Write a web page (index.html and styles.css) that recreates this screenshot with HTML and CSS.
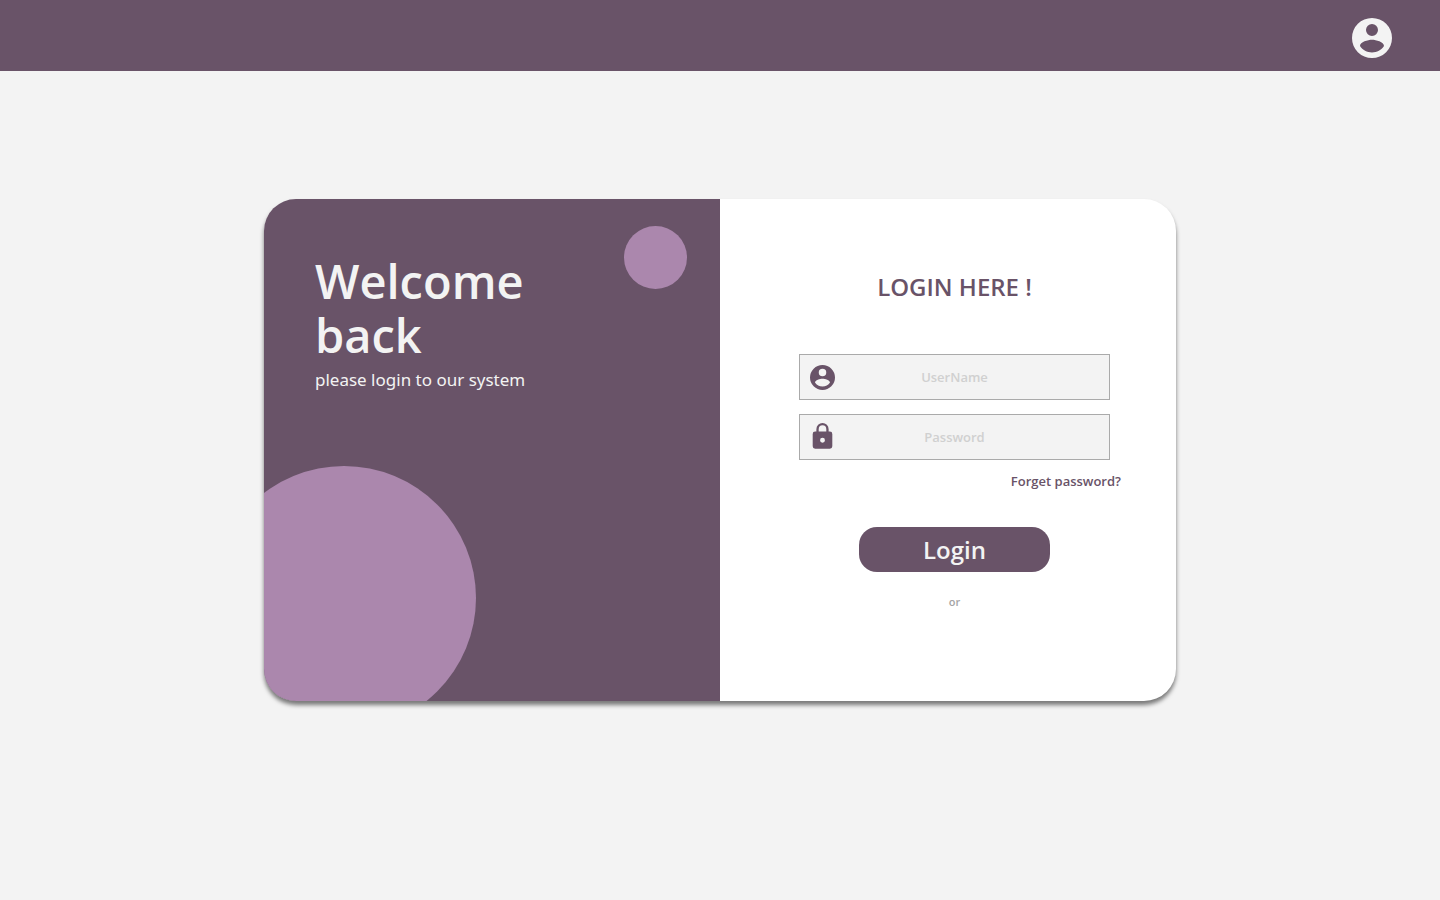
FILE: index.html
```html
<!DOCTYPE html>
<html lang="en">
<head>
<meta charset="utf-8">
<meta name="viewport" content="width=device-width, initial-scale=1">
<title>Login</title>
<link rel="stylesheet" href="styles.css">
</head>
<body>
<header class="topbar">
  <button class="account" type="button" aria-label="Account">
    <svg viewBox="2 2 20 20" aria-hidden="true"><path fill-rule="evenodd" d="M12 2a10 10 0 1 0 0 20 10 10 0 0 0 0-20zm0 3a3 3 0 1 1 0 6 3 3 0 0 1 0-6zm0 14.2c-2.5 0-4.71-1.28-6-3.22.03-1.99 4-3.08 6-3.08 1.99 0 5.97 1.09 6 3.08-1.29 1.94-3.5 3.22-6 3.22z"/></svg>
  </button>
</header>
<main class="page">
  <div class="card">
    <section class="welcome">
      <span class="circle circle-small"></span>
      <span class="circle circle-large"></span>
      <h1 class="welcome-title">Welcome<br>back</h1>
      <p class="welcome-text">please login to our system</p>
    </section>
    <form class="login">
      <h2 class="login-title">LOGIN HERE !</h2>
      <label class="field">
        <svg class="field-icon" viewBox="2 2 20 20" aria-hidden="true"><path fill-rule="evenodd" d="M12 2a10 10 0 1 0 0 20 10 10 0 0 0 0-20zm0 3a3 3 0 1 1 0 6 3 3 0 0 1 0-6zm0 14.2c-2.5 0-4.71-1.28-6-3.22.03-1.99 4-3.08 6-3.08 1.99 0 5.97 1.09 6 3.08-1.29 1.94-3.5 3.22-6 3.22z"/></svg>
        <input class="field-input" type="text" placeholder="UserName" aria-label="UserName">
      </label>
      <label class="field">
        <svg class="field-icon" viewBox="1.8 2.6 20.4 20.4" aria-hidden="true"><path fill-rule="evenodd" d="M18 8h-1V6A5 5 0 0 0 7 6v2H6a2 2 0 0 0-2 2v10a2 2 0 0 0 2 2h12a2 2 0 0 0 2-2V10a2 2 0 0 0-2-2zm-6 9a2 2 0 1 1 0-4 2 2 0 0 1 0 4zM8.900 8V6a3.100 3.100 0 0 1 6.200 0v2z"/></svg>
        <input class="field-input" type="password" placeholder="Password" aria-label="Password">
      </label>
      <a class="forgot" href="#">Forget password?</a>
      <button class="submit" type="submit">Login</button>
      <p class="or">or</p>
    </form>
  </div>
</main>
</body>
</html>
```
FILE: styles.css
```css
* {
  box-sizing: border-box;
}

body {
  margin: 0;
  min-height: 100vh;
  background: #f3f3f3;
  color: #695368;
  font-family: "Open Sans", "Noto Sans", sans-serif;
}

.topbar {
  display: flex;
  justify-content: flex-end;
  padding: 18px 48px 13px;
  background: #695368;
}

.account {
  width: 40px;
  height: 40px;
  padding: 0;
  border: 0;
  background: none;
}

.account svg {
  display: block;
  fill: #f3f3f3;
}

.page {
  display: flex;
  justify-content: center;
  padding: 128px 24px;
}

.card {
  display: grid;
  grid-template-columns: 1fr 1fr;
  width: 100%;
  max-width: 912px;
  border-radius: 32px;
  background: #fff;
  box-shadow: 0 4px 4px rgba(0, 0, 0, 0.5);
  overflow: hidden;
}

.welcome {
  position: relative;
  overflow: hidden;
  padding: 55px 51px;
  background: #695368;
  color: #f3f3f3;
}

.welcome-title {
  position: relative;
  margin: 0;
  font-size: 47px;
  font-weight: 600;
  line-height: 54px;
}

.welcome-text {
  position: relative;
  margin: 6px 0 0;
  font-family: "Noto Sans", "Open Sans", sans-serif;
  font-size: 17px;
  line-height: 24px;
}

.circle {
  position: absolute;
  border-radius: 50%;
  background: #ab87ad;
}

.circle-small {
  top: 27px;
  right: 33px;
  width: 63px;
  height: 63px;
}

.circle-large {
  top: 267px;
  left: -52px;
  width: 264px;
  height: 264px;
}

.login {
  display: flex;
  flex-direction: column;
  padding: 72px 66px 89px 79px;
}

.login-title {
  margin: 0 0 51px;
  font-size: 24px;
  font-weight: 600;
  line-height: 32px;
  text-align: center;
}

.field {
  display: grid;
  grid-template-columns: 44px 1fr 44px;
  align-items: center;
  height: 46px;
  margin-bottom: 14px;
  border: 1px solid #aaa;
  background: #f3f3f3;
}

.field-icon {
  width: 25px;
  height: 25px;
  margin-left: 10px;
  overflow: visible;
  fill: #695368;
}

.field-input {
  width: 100%;
  height: 44px;
  padding: 0;
  border: 0;
  outline: 0;
  background: none;
  color: #695368;
  font: 600 13px/20px "Open Sans", "Noto Sans", sans-serif;
  text-align: center;
}

.field-input::placeholder {
  color: #d0d0d0;
  opacity: 1;
}

.forgot {
  align-self: flex-end;
  margin: -3px -11px 36px 0;
  color: #695368;
  font-size: 13px;
  font-weight: 600;
  line-height: 20px;
  text-decoration: none;
}

.submit {
  align-self: center;
  width: 191px;
  height: 45px;
  padding: 0;
  border: 0;
  border-radius: 18px;
  background: #695368;
  color: #f3f3f3;
  font: 600 24px/32px "Open Sans", "Noto Sans", sans-serif;
}

.or {
  margin: 20px 0 0;
  color: #a4a4a4;
  font-size: 11px;
  font-weight: 600;
  line-height: 20px;
  text-align: center;
}
```
